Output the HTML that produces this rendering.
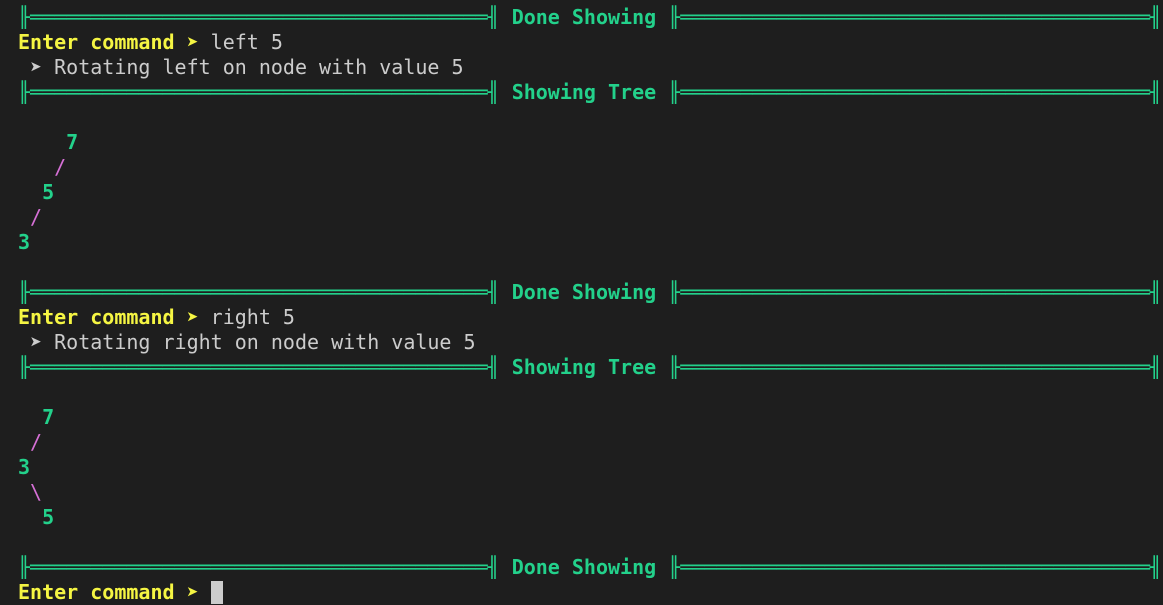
<!DOCTYPE html>
<html><head><meta charset="utf-8"><style>
html,body{margin:0;padding:0;background:#1e1e1e;width:1163px;height:605px;overflow:hidden}
pre{margin:0;padding:5px 0 0 18px;font-family:"DejaVu Sans Mono","Liberation Mono",monospace;font-size:20px;line-height:25px;color:#cccccc;white-space:pre}
.g{color:#23d18b;font-weight:bold}
.b{color:#23d18b}
.y{color:#f5f543;font-weight:bold}
.m{color:#d670d6}
.c{display:inline-block;width:12px;height:23px;background:#cccccc;vertical-align:-5px}
</style></head><body><pre><span class="b">╟══════════════════════════════════════╢</span> <span class="g">Done Showing</span> <span class="b">╟═══════════════════════════════════════╢</span>
<span class="y">Enter command ➤</span> left 5
 ➤ Rotating left on node with value 5
<span class="b">╟══════════════════════════════════════╢</span> <span class="g">Showing Tree</span> <span class="b">╟═══════════════════════════════════════╢</span>

<span class="g">    7</span>
<span class="m">   /</span>
<span class="g">  5</span>
<span class="m"> /</span>
<span class="g">3</span>

<span class="b">╟══════════════════════════════════════╢</span> <span class="g">Done Showing</span> <span class="b">╟═══════════════════════════════════════╢</span>
<span class="y">Enter command ➤</span> right 5
 ➤ Rotating right on node with value 5
<span class="b">╟══════════════════════════════════════╢</span> <span class="g">Showing Tree</span> <span class="b">╟═══════════════════════════════════════╢</span>

<span class="g">  7</span>
<span class="m"> /</span>
<span class="g">3</span>
<span class="m"> \</span>
<span class="g">  5</span>

<span class="b">╟══════════════════════════════════════╢</span> <span class="g">Done Showing</span> <span class="b">╟═══════════════════════════════════════╢</span>
<span class="y">Enter command ➤</span> <span class="c"></span></pre></body></html>
